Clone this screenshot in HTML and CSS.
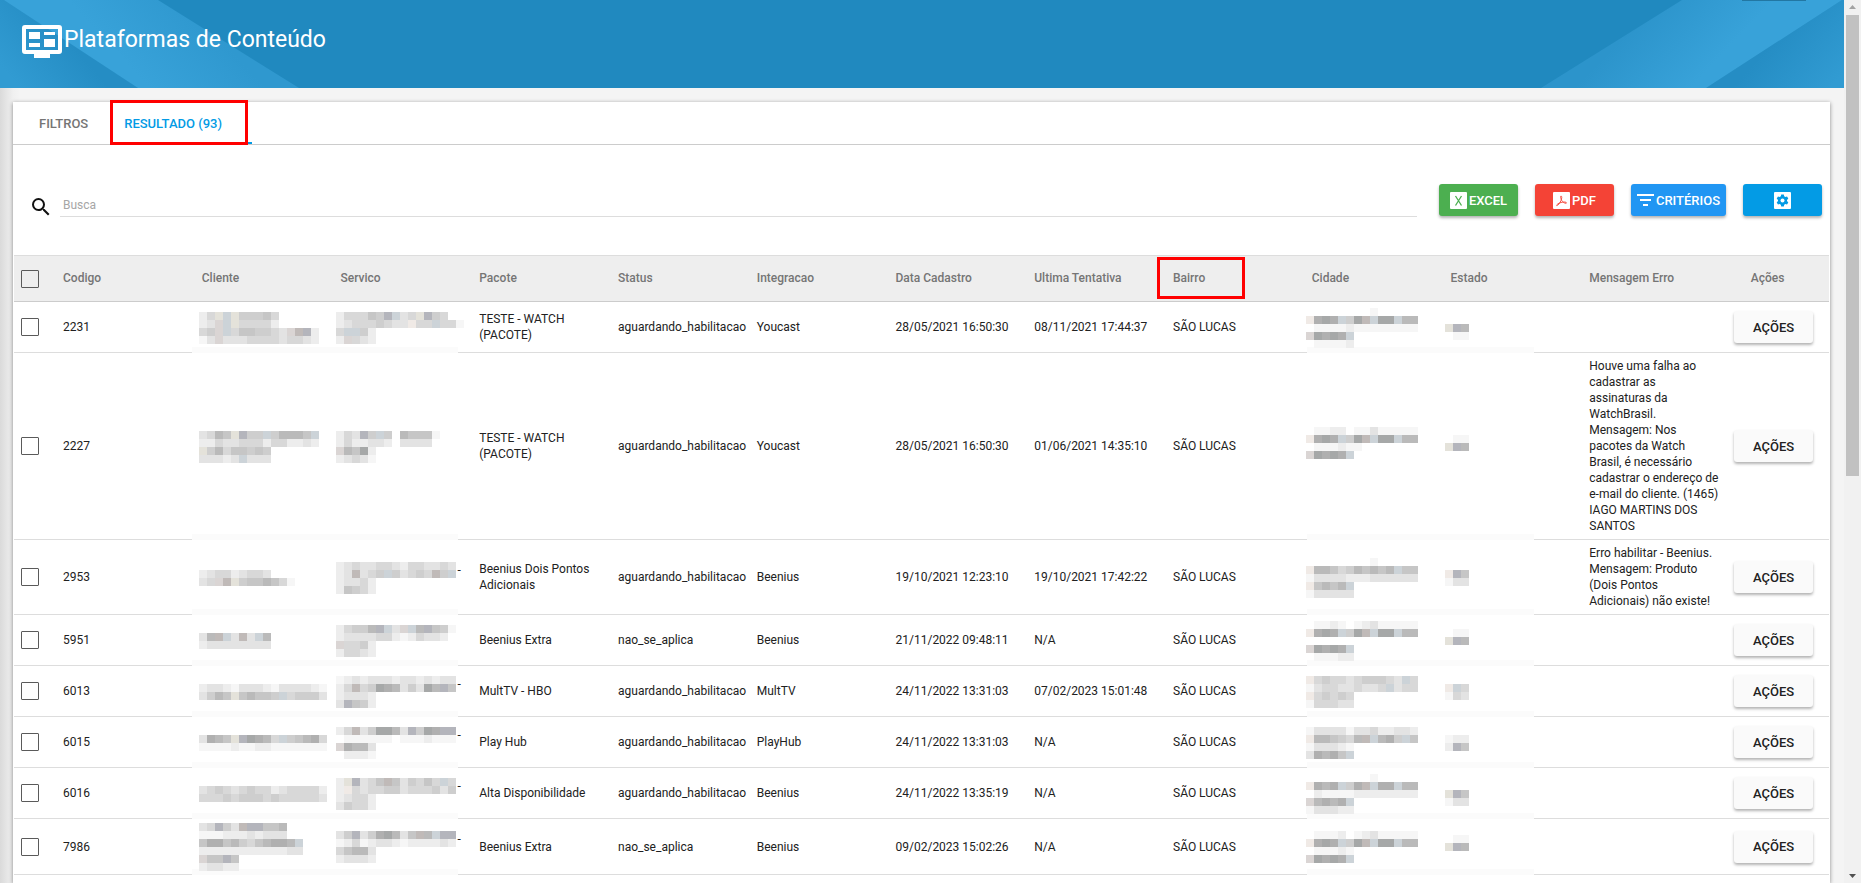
FILE: index.html
```html
<!DOCTYPE html>
<html lang="pt-BR">
<head>
  <meta charset="UTF-8" />
  <title>Plataformas de Conteúdo</title>
  <meta name="viewport" content="width=device-width,initial-scale=1" />
  <link rel="stylesheet" href="styles.css">
</head>
<body>
  <div class="page">
    <header class="banner">
      <svg class="banner-left" width="300" height="88" viewBox="0 0 300 88">
        <defs>
          <linearGradient id="shadeLeft" gradientUnits="userSpaceOnUse" x1="20" y1="88" x2="72" y2="44">
            <stop offset="0" stop-color="#319bd2"/><stop offset="1" stop-color="#258dc4"/>
          </linearGradient>
          <linearGradient id="bandLeft" gradientUnits="userSpaceOnUse" x1="150" y1="88" x2="212" y2="30">
            <stop offset="0" stop-color="#38a2d9"/><stop offset="1" stop-color="#2f98cf"/>
          </linearGradient>
        </defs>
        <path fill="url(#shadeLeft)" d="M0 0H8L138 88H0z"/>
        <path fill="url(#bandLeft)" d="M4 0H158L299 88H138z"/>
      </svg>
      <svg class="banner-right" width="304" height="88" viewBox="0 0 304 88">
        <defs>
          <linearGradient id="shadeRight" gradientUnits="userSpaceOnUse" x1="290" y1="88" x2="234" y2="40">
            <stop offset="0" stop-color="#319bd2"/><stop offset="1" stop-color="#258dc4"/>
          </linearGradient>
          <linearGradient id="bandRight" gradientUnits="userSpaceOnUse" x1="150" y1="88" x2="90" y2="30">
            <stop offset="0" stop-color="#38a2d9"/><stop offset="1" stop-color="#2c94cb"/>
          </linearGradient>
        </defs>
        <path fill="url(#shadeRight)" d="M302 0H304V88H166z"/>
        <path fill="url(#bandRight)" d="M142 0H302L166 88H1z"/>
        <path fill="#2277a3" d="M202 0H266V1H202z"/>
      </svg>
      <h1>
        <svg width="40" height="34" viewBox="0 0 40 34" fill="#fff">
          <path fill-rule="evenodd" d="M3 0H37a3 3 0 0 1 3 3V26a3 3 0 0 1-3 3H28v4H12v-4H3a3 3 0 0 1-3-3V3a3 3 0 0 1 3-3zM4 4V25H36V4z"/>
          <path d="M7 7H18V14H7zM7 18H18V22H7zM22 7H33V10H22zM22 14H33V22H22z"/>
        </svg>
        Plataformas de Conteúdo
      </h1>
    </header>

    <main class="card">
      <nav class="tabs">
        <a href="#filtros" class="tab">FILTROS</a>
        <a href="#resultado" class="tab active marked">RESULTADO (93)</a>
      </nav>

      <div class="toolbar">
        <label class="search">
          <svg width="24" height="24" viewBox="0 0 24 24" fill="#111"><path d="M15.5 14h-.79l-.28-.27A6.47 6.47 0 0 0 16 9.5 6.5 6.5 0 1 0 9.5 16c1.61 0 3.09-.59 4.23-1.57l.27.28v.79l5 4.99L20.49 19l-4.99-5zm-6 0C7.01 14 5 11.99 5 9.5S7.01 5 9.5 5 14 7.01 14 9.5 11.99 14 9.5 14z"/></svg>
          <input type="text" placeholder="Busca" aria-label="Busca">
        </label>
        <div class="buttons">
          <button class="btn green">
            <svg width="17" height="17" viewBox="0 0 17 17"><rect width="17" height="17" rx="1" fill="#fff"/><path d="M5.500 4L11.500 13.500M11.500 4L5.500 13.500" stroke="#4caf50" stroke-width="1.300" fill="none"/></svg>
            EXCEL
          </button>
          <button class="btn red">
            <svg width="17" height="17" viewBox="0 0 17 17"><rect width="17" height="17" rx="1" fill="#fff"/><path d="M8 4c1.200 0 .8 2.500 0 4.500C7 11 5 13.500 3.800 13.600 3 13.200 5 11.300 8 10.500c2.500-.7 5.500-.7 5.500.4 0 1-2.500.2-4-1.400C8 8 7 4 8 4z" stroke="#f44336" stroke-width=".9" fill="none"/></svg>
            PDF
          </button>
          <button class="btn blue wide">
            <svg width="17" height="12" viewBox="0 0 17 12" fill="#fff"><path d="M0 0H17V2H0zM3 5H14V7H3zM6 10H11V12H6z"/></svg>
            CRITÉRIOS
          </button>
          <button class="btn sky" aria-label="Configurações">
            <svg width="17" height="17" viewBox="0 0 17 17"><rect width="17" height="17" rx="1" fill="#fff"/><path fill="#039be5" d="M7.200 2.500H9.800L10.200 4.300 11.300 4.900 13 4.400 14.300 6.600 13 7.900V9.100L14.300 10.400 13 12.600 11.300 12.100 10.200 12.700 9.800 14.500H7.200L6.800 12.700 5.700 12.100 4 12.600 2.700 10.400 4 9.100V7.900L2.700 6.600 4 4.400 5.700 4.900 6.800 4.300z"/><circle cx="8.500" cy="8.500" r="2" fill="#fff"/></svg>
          </button>
        </div>
      </div>

      <table>
        <colgroup>
          <col class="col-check"><col span="12"><col class="col-actions">
        </colgroup>
        <thead>
          <tr>
            <th><input type="checkbox" aria-label="Selecionar todos"></th>
            <th>Codigo</th><th>Cliente</th><th>Servico</th><th>Pacote</th><th>Status</th><th>Integracao</th>
            <th>Data Cadastro</th><th>Ultima Tentativa</th><th><span class="marked">Bairro</span></th><th>Cidade</th><th>Estado</th><th>Mensagem Erro</th>
            <th class="actions">Ações</th>
          </tr>
        </thead>
        <tbody>
          <tr>
            <td><input type="checkbox" aria-label="2231"></td>
            <td>2231</td>
            <td class="hid cliente"><svg data-px="24yby55564 23pby44442 45pb4665543prc2 13p333444434432"></svg></td>
            <td class="hid servico"><svg data-px="244465cb34yc54 234445433w44b441 4bb52 2p432"></svg></td>
            <td>TESTE - WATCH (PACOTE)</td><td>aguardando_habilitacao</td><td>Youcast</td>
            <td>28/05/2021 16:50:30</td><td>08/11/2021 17:44:37</td><td>SÃO LUCAS</td>
            <td class="hid cidade"><svg data-px="........1 w898b59rb99b77 .1111211111111 p9898b .11112"></svg></td>
            <td class="hid estado"><svg data-px="... yc7 .11"></svg></td>
            <td class="erro"></td>
            <td class="actions"><button class="btn plain">AÇÕES</button></td>
          </tr>
          <tr>
            <td><input type="checkbox" aria-label="2227"></td>
            <td>2227</td>
            <td class="hid cliente"><svg data-px="3476yc55b57776b 224334442442232 y57466565 33323b333"></svg></td>
            <td class="hid servico"><svg data-px="243c5b5.76661 2422332.3333 p7692 23431"></svg></td>
            <td>TESTE - WATCH (PACOTE)</td><td>aguardando_habilitacao</td><td>Youcast</td>
            <td>28/05/2021 16:50:30</td><td>01/06/2021 14:35:10</td><td>SÃO LUCAS</td>
            <td class="hid cidade"><svg data-px=".1122.11311111 w898b59rb99b77 .111211 p9898b ."></svg></td>
            <td class="hid estado"><svg data-px=".11 yc7 ."></svg></td>
            <td class="erro">Houve uma falha ao<br>cadastrar as<br>assinaturas da<br>WatchBrasil.<br>Mensagem: Nos<br>pacotes da Watch<br>Brasil, é necessário<br>cadastrar o endereço de<br>e-mail do cliente. (1465)<br>IAGO MARTINS DOS<br>SANTOS</td>
            <td class="actions"><button class="btn plain">AÇÕES</button></td>
          </tr>
          <tr>
            <td><input type="checkbox" aria-label="2953"></td>
            <td>2953</td>
            <td class="hid cliente"><svg data-px="234423443 34pry5667641"></svg></td>
            <td class="hid servico"><svg data-px="234334432443343 23r345b53454r5b 23342 26542"></svg>-</td>
            <td>Beenius Dois Pontos Adicionais</td><td>aguardando_habilitacao</td><td>Beenius</td>
            <td>19/10/2021 12:23:10</td><td>19/10/2021 17:42:22</td><td>SÃO LUCAS</td>
            <td class="hid cidade"><svg data-px="........1 w7764576767b66 13333222333333 w6767b 133333"></svg></td>
            <td class="hid estado"><svg data-px="wc6 133"></svg></td>
            <td class="erro">Erro habilitar - Beenius.<br>Mensagem: Produto<br>(Dois Pontos<br>Adicionais) não existe!</td>
            <td class="actions"><button class="btn plain">AÇÕES</button></td>
          </tr>
          <tr>
            <td><input type="checkbox" aria-label="5951"></td>
            <td>5951</td>
            <td class="hid cliente"><svg data-px="37rb3r3b7 233333333"></svg></td>
            <td class="hid servico"><svg data-px="24557cb3pb7c651 23333442124332 p4452 24432"></svg></td>
            <td>Beenius Extra</td><td>nao_se_aplica</td><td>Beenius</td>
            <td>21/11/2022 09:48:11</td><td>N/A</td><td>SÃO LUCAS</td>
            <td class="hid cidade"><svg data-px=".1121.12311111 w898b59rb99b77 . p9898b .11122"></svg></td>
            <td class="hid estado"><svg data-px=".11 yc7 ."></svg></td>
            <td class="erro"></td>
            <td class="actions"><button class="btn plain">AÇÕES</button></td>
          </tr>
          <tr>
            <td><input type="checkbox" aria-label="6013"></td>
            <td>6013</td>
            <td class="hid cliente"><svg data-px="2332133321333321 3576y67665b45553"></svg></td>
            <td class="hid servico"><svg data-px="123233323323233 24r4598735397c6 23332 3c652"></svg>-</td>
            <td>MultTV - HBO</td><td>aguardando_habilitacao</td><td>MultTV</td>
            <td>24/11/2022 13:31:03</td><td>07/02/2023 15:01:48</td><td>SÃO LUCAS</td>
            <td class="hid cidade"><svg data-px="w45443455543b4 1344334334b344 w45454 144433"></svg></td>
            <td class="hid estado"><svg data-px="wb4 143"></svg></td>
            <td class="erro"></td>
            <td class="actions"><button class="btn plain">AÇÕES</button></td>
          </tr>
          <tr>
            <td><input type="checkbox" aria-label="6015"></td>
            <td>6015</td>
            <td class="hid cliente"><svg data-px="3876yc9874b56784 1111211221111111"></svg></td>
            <td class="hid servico"><svg data-px="24r359973c598cc .111111.1112111 p8773 .2221"></svg>-</td>
            <td>Play Hub</td><td>aguardando_habilitacao</td><td>PlayHub</td>
            <td>24/11/2022 13:31:03</td><td>N/A</td><td>SÃO LUCAS</td>
            <td class="hid cidade"><svg data-px="13333133422332 w776547rb785b6 133321 38786b"></svg></td>
            <td class="hid estado"><svg data-px="122 2c6"></svg></td>
            <td class="erro"></td>
            <td class="actions"><button class="btn plain">AÇÕES</button></td>
          </tr>
          <tr>
            <td><input type="checkbox" aria-label="6016"></td>
            <td>6016</td>
            <td class="hid cliente"><svg data-px="3454345442344442 4445455545444443"></svg></td>
            <td class="hid servico"><svg data-px="2yc346r635464b4 2w4344553444535 23442 35442"></svg>-</td>
            <td>Alta Disponibilidade</td><td>aguardando_habilitacao</td><td>Beenius</td>
            <td>24/11/2022 13:35:19</td><td>N/A</td><td>SÃO LUCAS</td>
            <td class="hid cidade"><svg data-px="........1 w878b58rb88b77 .2111122222222 p7878b 133322"></svg></td>
            <td class="hid estado"><svg data-px="... yc6 133"></svg></td>
            <td class="erro"></td>
            <td class="actions"><button class="btn plain">AÇÕES</button></td>
          </tr>
          <tr>
            <td><input type="checkbox" aria-label="7986"></td>
            <td>7986</td>
            <td class="hid cliente"><svg data-px="34c53rcc667 11122232333 688675467887b 2222222222233 p66c6 23322"></svg></td>
            <td class="hid servico"><svg data-px="35c3589736r7bcc 124123321222232 46773 23332"></svg>-</td>
            <td>Beenius Extra</td><td>nao_se_aplica</td><td>Beenius</td>
            <td>09/02/2023 15:02:26</td><td>N/A</td><td>SÃO LUCAS</td>
            <td class="hid cidade"><svg data-px=".1112.12311111 w898b59rb99b77 .11121 p9898b"></svg></td>
            <td class="hid estado"><svg data-px=".11 yc7 ."></svg></td>
            <td class="erro"></td>
            <td class="actions"><button class="btn plain">AÇÕES</button></td>
          </tr>
        </tbody>
      </table>
    </main>
  </div>

  <div class="scroll">
    <svg width="17" height="15" viewBox="0 0 17 15"><path fill="#a3a3a3" d="M5 9L8.500 5L12 9z"/></svg>
    <div class="track"><div class="thumb"></div></div>
    <svg width="17" height="15" viewBox="0 0 17 15"><path fill="#505050" d="M5 6L8.500 10L12 6z"/></svg>
  </div>

  <script src="mosaic.js"></script>
</body>
</html>
```
FILE: styles.css
```css
* {
  box-sizing: border-box;
}
body {
  margin: 0;
  height: 100vh;
  display: flex;
  overflow: hidden;
  background: #f4f4f4;
  color: #212121;
  font-family: Roboto, sans-serif;
  font-size: 12px;
  line-height: 16px;
}
.page {
  flex: 1;
  min-width: 0;
  display: flex;
  flex-direction: column;
  background: linear-gradient(to right, #dadada, #f0f0f0 13px, #f4f4f4 20px);
}

/* Banner */
.banner {
  position: relative;
  height: 88px;
  flex: none;
  background: #2089bf;
  color: #fff;
}
.banner-left, .banner-right {
  position: absolute;
  top: 0;
}
.banner-left { left: 0; }
.banner-right { right: 0; }
.banner h1 {
  position: relative;
  margin: 0;
  padding: 24px 22px 0;
  display: flex;
  gap: 2px;
  font-size: 23px;
  line-height: 32px;
  font-weight: 400;
}
.banner h1 svg { margin-top: 1px; }

/* Card and tabs */
.card {
  flex: 1;
  margin: 14px 14px 0 13px;
  background: #fff;
  box-shadow: 0 1px 4px rgba(0,0,0,.45);
}
.tabs {
  display: flex;
  height: 43px;
  padding-left: 2px;
  border-bottom: 1px solid #ccc;
}
.tab {
  padding: 0 22px 0 24px;
  color: #757575;
  font-size: 13px;
  line-height: 44px;
  font-weight: 500;
  text-decoration: none;
}
.tab.active {
  padding: 0 30px 0 14px;
  color: #039be5;
  border-bottom: 2px solid #039be5;
}

/* Red highlight frames */
.marked { position: relative; }
.marked::after {
  content: "";
  position: absolute;
  box-sizing: border-box;
  border: 3px solid #f00;
}
.tab.marked::after { inset: -2px 4px -3px 0; }
th .marked::after {
  left: -16px;
  top: -14px;
  width: 88px;
  height: 42px;
}

/* Toolbar */
.toolbar {
  height: 110px;
  padding: 0 8px 0 16px;
  display: flex;
  align-items: center;
  gap: 22px;
}
.search {
  flex: 1;
  display: flex;
  align-items: center;
  gap: 7px;
}
.search svg { margin-top: 14px; }
.search input {
  flex: 1;
  height: 34px;
  padding: 10px 3px 0;
  border: 0;
  border-bottom: 1px solid #ddd;
  outline: none;
  font: inherit;
}
.search input::placeholder { color: #a6a6a6; }
.buttons {
  display: flex;
  gap: 17px;
}
.btn {
  min-width: 79px;
  height: 32px;
  padding: 0;
  display: inline-flex;
  align-items: center;
  justify-content: center;
  gap: 2px;
  border: 0;
  border-radius: 3px;
  color: #fff;
  font-family: inherit;
  font-size: 13px;
  font-weight: 500;
  box-shadow: 0 2px 3px rgba(0,0,0,.3);
}
.wide { min-width: 95px; }
.green { background: #4caf50; }
.red { background: #f44336; }
.blue { background: #2196f3; }
.sky { background: #039be5; }
.plain {
  background: #fafafa;
  color: #212121;
}

/* Table */
table {
  width: calc(100% - 2px);
  margin: 0 1px;
  table-layout: fixed;
  border-collapse: separate;
  border-spacing: 0;
}
.col-check { width: 39px; }
.col-actions { width: 111px; }
th, td {
  padding: 5px 10px;
  text-align: left;
  vertical-align: middle;
  border-bottom: 1px solid #ddd;
}
th {
  height: 47px;
  padding-bottom: 7px;
  background: #eee;
  color: #757575;
  font-weight: 500;
  border-top: 1px solid #ddd;
  border-bottom-color: #ccc;
}
td { height: 51px; }
th:first-child, td:first-child { padding: 0 7px; }
th.actions {
  padding-right: 22px;
  text-align: center;
}
td.actions {
  padding: 0;
  text-align: center;
}
td.actions .btn { vertical-align: middle; }
td.erro {
  padding-right: 0;
  white-space: nowrap;
}
input[type=checkbox] {
  appearance: none;
  display: block;
  width: 18px;
  height: 18px;
  margin: 0;
  border: 1px solid #5a5a5a;
  border-radius: 1px;
}

/* Censored cells: the row line is covered by a pale strip */
.hid {
  padding: 4px 0 4px 5px;
  white-space: nowrap;
  border-bottom: 0;
  background: linear-gradient(#fbfbfb, #fbfbfb) left bottom / 100% 6px no-repeat;
}
.hid svg {
  display: inline-block;
  vertical-align: middle;
}
.cliente { padding-left: 7px; }
.servico {
  padding-left: 5px;
  background:
    linear-gradient(#ddd, #ddd) right bottom / 11px 1px no-repeat,
    linear-gradient(#fbfbfb, #fbfbfb) left bottom / calc(100% - 11px) 6px no-repeat;
}
.servico svg {
  vertical-align: -20px;
  margin-right: 2px;
}
.cidade {
  padding-left: 4px;
  background:
    linear-gradient(#ddd, #ddd) left bottom / 5px 1px no-repeat,
    linear-gradient(#fbfbfb, #fbfbfb) right bottom / calc(100% - 5px) 6px no-repeat;
}
.estado {
  padding-left: 4px;
  background:
    linear-gradient(#ddd, #ddd) right bottom / 45px 1px no-repeat,
    linear-gradient(#fbfbfb, #fbfbfb) left bottom / calc(100% - 45px) 6px no-repeat;
}

/* Scrollbar */
.scroll {
  width: 17px;
  display: flex;
  flex-direction: column;
  background: #f1f1f1;
}
.track {
  flex: 1;
  padding: 0 2px;
}
.thumb {
  height: 54%;
  background: #c1c1c1;
}
```
FILE: mosaic.js
```js
// Draws the censored values: one character per 8px tile, one word per line
const colors = {
  1: '#f6f6f6', 2: '#ededed', 3: '#e3e3e3', 4: '#d8d8d8', 5: '#cecece',
  6: '#c6c6c6', 7: '#bababa', 8: '#b0b0b0', 9: '#a6a8a8',
  b: '#ccd3d8', c: '#b4b5bc', p: '#dad5d4', r: '#c0bab8', w: '#f0eae6', y: '#e4e2da'
};
const size = 8;

document.querySelectorAll('svg[data-px]').forEach(svg => {
  const lines = svg.dataset.px.split(' ');
  svg.setAttribute('width', Math.max(...lines.map(l => l.length)) * size);
  svg.setAttribute('height', lines.length * size);
  lines.forEach((line, y) => {
    [...line].forEach((c, x) => {
      if (!colors[c]) return;
      const tile = document.createElementNS('http://www.w3.org/2000/svg', 'rect');
      tile.setAttribute('x', x * size);
      tile.setAttribute('y', y * size);
      tile.setAttribute('width', size);
      tile.setAttribute('height', size);
      tile.setAttribute('fill', colors[c]);
      svg.appendChild(tile);
    });
  });
});
```
